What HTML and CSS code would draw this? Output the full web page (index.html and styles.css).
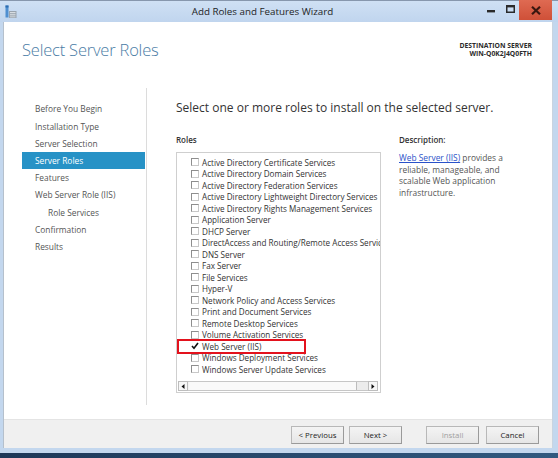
FILE: index.html
```html
<!DOCTYPE html>
<html>
<head>
<meta charset="utf-8">
<title>Add Roles and Features Wizard</title>
<link rel="stylesheet" href="styles.css">
</head>
<body>
<div class="window">
  <div class="titlebar">
    <div class="app-icon">
      <svg width="12" height="14" viewBox="0 0 12 14">
        <rect x="0.5" y="0.5" width="3" height="12" fill="#4f8fd0"/>
        <rect x="0.5" y="0.5" width="3" height="2" fill="#2c6cb0"/>
        <rect x="4" y="6" width="7.5" height="7" fill="#9aa4ae"/>
        <rect x="5" y="7" width="5.5" height="1.2" fill="#d8dde2"/>
        <rect x="5" y="9.2" width="5.5" height="1.2" fill="#d8dde2"/>
        <rect x="5" y="11.4" width="5.5" height="0.9" fill="#d8dde2"/>
      </svg>
    </div>
    <div class="title">Add Roles and Features Wizard</div>
    <div class="controls">
      <div class="ctl ctl-min"><svg width="8" height="3" viewBox="0 0 8 3"><rect x="0" y="0" width="8" height="2.4" fill="#2a2a2a"/></svg></div>
      <div class="ctl ctl-max"><svg width="9" height="8" viewBox="0 0 9 8"><rect x="0.75" y="0.75" width="7.5" height="6.5" fill="none" stroke="#2a2a2a" stroke-width="1.5"/><rect x="0" y="0" width="9" height="2.4" fill="#2a2a2a"/></svg></div>
      <div class="ctl ctl-close"><svg width="10" height="9" viewBox="0 0 10 9"><path d="M1 0.8 L9 8.2 M9 0.8 L1 8.2" stroke="#3b1710" stroke-width="2.2"/></svg></div>
    </div>
  </div>

  <div class="frame">
    <div class="client">
      <header class="head">
        <h1 class="page-title">Select Server Roles</h1>
        <div class="dest">
          <div>DESTINATION SERVER</div>
          <div>WIN-Q0K2J4Q0FTH</div>
        </div>
      </header>

      <div class="main">
        <nav class="nav">
          <div class="nav-item">Before You Begin</div>
          <div class="nav-item">Installation Type</div>
          <div class="nav-item">Server Selection</div>
          <div class="nav-item active">Server Roles</div>
          <div class="nav-item">Features</div>
          <div class="nav-item">Web Server Role (IIS)</div>
          <div class="nav-item sub">Role Services</div>
          <div class="nav-item">Confirmation</div>
          <div class="nav-item">Results</div>
        </nav>

        <section class="content">
          <div class="lead">Select one or more roles to install on the selected server.</div>
          <div class="columns">
            <div class="roles">
              <div class="label">Roles</div>
              <div class="listbox">
                <ul class="items">
                  <li><span class="cb"></span>Active Directory Certificate Services</li>
                  <li><span class="cb"></span>Active Directory Domain Services</li>
                  <li><span class="cb"></span>Active Directory Federation Services</li>
                  <li><span class="cb"></span>Active Directory Lightweight Directory Services</li>
                  <li><span class="cb"></span>Active Directory Rights Management Services</li>
                  <li><span class="cb"></span>Application Server</li>
                  <li><span class="cb"></span>DHCP Server</li>
                  <li><span class="cb"></span>DirectAccess and Routing/Remote Access Services</li>
                  <li><span class="cb"></span>DNS Server</li>
                  <li><span class="cb"></span>Fax Server</li>
                  <li><span class="cb"></span>File Services</li>
                  <li><span class="cb"></span>Hyper-V</li>
                  <li><span class="cb"></span>Network Policy and Access Services</li>
                  <li><span class="cb"></span>Print and Document Services</li>
                  <li><span class="cb"></span>Remote Desktop Services</li>
                  <li><span class="cb"></span>Volume Activation Services</li>
                  <li class="checked"><span class="cb"><svg width="8" height="8" viewBox="0 0 8 8"><path d="M1 4 L3 6.3 L7 1" fill="none" stroke="#111" stroke-width="1.6"/></svg></span>Web Server (IIS)<span class="annot"></span></li>
                  <li><span class="cb"></span>Windows Deployment Services</li>
                  <li><span class="cb"></span>Windows Server Update Services</li>
                </ul>
                <div class="hscroll">
                  <div class="sbtn"><svg width="4" height="5" viewBox="0 0 4 5"><path d="M3.5 0 L0.5 2.5 L3.5 5 Z" fill="#111"/></svg></div>
                  <div class="thumb"></div>
                  <div class="track"></div>
                  <div class="sbtn"><svg width="4" height="5" viewBox="0 0 4 5"><path d="M0.5 0 L3.5 2.5 L0.5 5 Z" fill="#111"/></svg></div>
                </div>
              </div>
            </div>
            <div class="desc">
              <div class="label">Description:</div>
              <p class="desc-text"><span class="link">Web Server (IIS)</span> provides a<br>reliable, manageable, and<br>scalable Web application<br>infrastructure.</p>
            </div>
          </div>
        </section>
      </div>

      <footer class="foot">
        <button class="btn">&lt; Previous</button>
        <button class="btn">Next &gt;</button>
        <button class="btn disabled gap">Install</button>
        <button class="btn">Cancel</button>
      </footer>
    </div>
  </div>
  <div class="bottom-frame"></div>
  <div class="taskbar"></div>
</div>
</body>
</html>
```

FILE: styles.css
```css
* { box-sizing: border-box; }
html, body { margin: 0; padding: 0; }
body {
  width: 558px;
  height: 458px;
  overflow: hidden;
  font-family: "Open Sans", "Noto Sans", sans-serif;
  background: #c3d7ee;
  color: #333;
}
.window {
  display: flex;
  flex-direction: column;
  height: 458px;
}

/* title bar */
.titlebar {
  height: 22px;
  flex: none;
  display: flex;
  align-items: flex-start;
  background: linear-gradient(#cfe0f4, #c0d5ee);
  border-top: 1px solid #8797ad;
}
.app-icon {
  width: 44px;
  padding: 4px 0 0 5px;
  flex: none;
}
.app-icon svg { display: block; }
.title {
  flex: 1;
  text-align: center;
  font-size: 9.8px;
  line-height: 21px;
  color: #1e1e1e;
}
.controls {
  display: flex;
  flex: none;
  margin-right: 6px;
}
.ctl {
  height: 20px;
  display: flex;
  align-items: center;
  justify-content: center;
  margin-top: -1px;
}
.ctl svg { display: block; }
.ctl-min { width: 20px; padding-top: 3px; }
.ctl-max { width: 18px; padding-bottom: 2px; }
.ctl-close {
  width: 33px;
  background: linear-gradient(#df6a52, #cf5038);
}

/* frame */
.frame {
  flex: 1;
  display: flex;
  border-left: 3px solid #c3d7ee;
  border-right: 5px solid #c3d7ee;
  min-height: 0;
}
.client {
  flex: 1;
  display: flex;
  flex-direction: column;
  background: #fff;
  border-left: 1px solid #b5c0cc;
  border-right: 1px solid #c9d4e0;
}
.bottom-frame {
  height: 5px;
  flex: none;
  background: #c3d7ee;
}
.taskbar {
  height: 5px;
  flex: none;
  background: linear-gradient(90deg, #1d3757, #2a4d72 60%, #31597f);
}

/* header */
.head {
  height: 66px;
  flex: none;
  display: flex;
  justify-content: space-between;
  align-items: flex-start;
  padding: 0 20px 0 18px;
}
.page-title {
  margin: 17px 0 0;
  font-weight: 300;
  font-size: 16.5px;
  line-height: 22px;
  color: #4a7ca5;
  letter-spacing: -0.2px;
}
.dest {
  margin-top: 20px;
  text-align: right;
  font-size: 6.8px;
  font-weight: 700;
  line-height: 8px;
  color: #2b2b2b;
}

/* main */
.main {
  flex: 1;
  display: flex;
  padding-bottom: 14px;
  min-height: 0;
}
.nav {
  width: 143px;
  flex: none;
  padding: 12.4px 1px 0 18px;
  border-right: 1px solid #dcdcdc;
}
.nav-item {
  height: 17.2px;
  line-height: 17.2px;
  padding-left: 13px;
  font-size: 8.4px;
  color: #555;
  white-space: nowrap;
}
.nav-item.sub { padding-left: 26px; }
.nav-item.active {
  background: #2792c6;
  color: #fff;
}

.content {
  flex: 1;
  padding: 11px 0 0 29px;
  min-width: 0;
}
.lead {
  font-size: 12px;
  line-height: 17px;
  color: #333;
  white-space: nowrap;
}
.columns {
  display: flex;
  margin-top: 17px;
}
.label {
  font-size: 8px;
  line-height: 13px;
  font-weight: 600;
  color: #333;
}
.roles {
  width: 205px;
  flex: none;
}
.listbox {
  margin-top: 6px;
  height: 241px;
  border: 1px solid #cfcfcf;
  display: flex;
  flex-direction: column;
  overflow: hidden;
}
.items {
  list-style: none;
  margin: 0;
  padding: 3.6px 0 0 14px;
  flex: 1;
  overflow: hidden;
}
.items li {
  position: relative;
  display: flex;
  align-items: center;
  height: 11.5px;
  font-size: 8.15px;
  color: #333;
  white-space: nowrap;
}
.cb {
  width: 8px;
  height: 8px;
  flex: none;
  margin-right: 3px;
  border: 1px solid #8e8e8e;
  border-right-color: #c8c8c8;
  border-bottom-color: #c8c8c8;
  background: #fff;
  position: relative;
}
.checked .cb { border-color: transparent; }
.cb svg {
  position: absolute;
  left: -1px;
  top: -1px;
}
.annot {
  position: absolute;
  left: -14px;
  top: -2px;
  width: 129px;
  height: 15.5px;
  border: 2.5px solid #e3121d;
}
.hscroll {
  height: 10px;
  flex: none;
  display: flex;
  margin: 0 2px 1px 1px;
  border: 1px solid #c6c6c6;
  background: #f3f3f3;
}
.sbtn {
  width: 10px;
  flex: none;
  display: flex;
  align-items: center;
  justify-content: center;
  background: #f7f7f7;
  border: 1px solid #bdbdbd;
  margin: -1px;
}
.sbtn svg { display: block; }
.thumb {
  flex: 1;
  background: #f9f9f9;
  border-right: 1px solid #bcbcbc;
  margin-left: 2px;
}
.track {
  width: 12px;
  flex: none;
  background: #ececec;
}

.desc {
  margin-left: 18px;
  width: 135px;
}
.desc-text {
  margin: 6px 0 0;
  font-size: 8.4px;
  line-height: 11.7px;
  color: #555;
  white-space: nowrap;
}
.link {
  color: #2a52c9;
  text-decoration: underline;
}

/* footer */
.foot {
  height: 29px;
  flex: none;
  display: flex;
  justify-content: flex-end;
  align-items: flex-start;
  padding: 6px 13px 0 0;
  background: #f0f0f0;
  border-top: 1px solid #e4e4e4;
}
.btn {
  width: 53px;
  height: 18px;
  margin: 0 0 0 5px;
  padding: 0;
  font-family: inherit;
  font-size: 7.8px;
  color: #222;
  background: linear-gradient(#f4f4f4, #e6e6e6);
  border: 1px solid #b8b8b8;
  border-right-color: #9a9a9a;
  border-bottom-color: #9a9a9a;
  border-radius: 0;
}
.btn.gap { margin-left: 24px; }
.btn.disabled { color: #a0a0a0; }
.btn + .btn:last-child { margin-left: 7px; }
```
